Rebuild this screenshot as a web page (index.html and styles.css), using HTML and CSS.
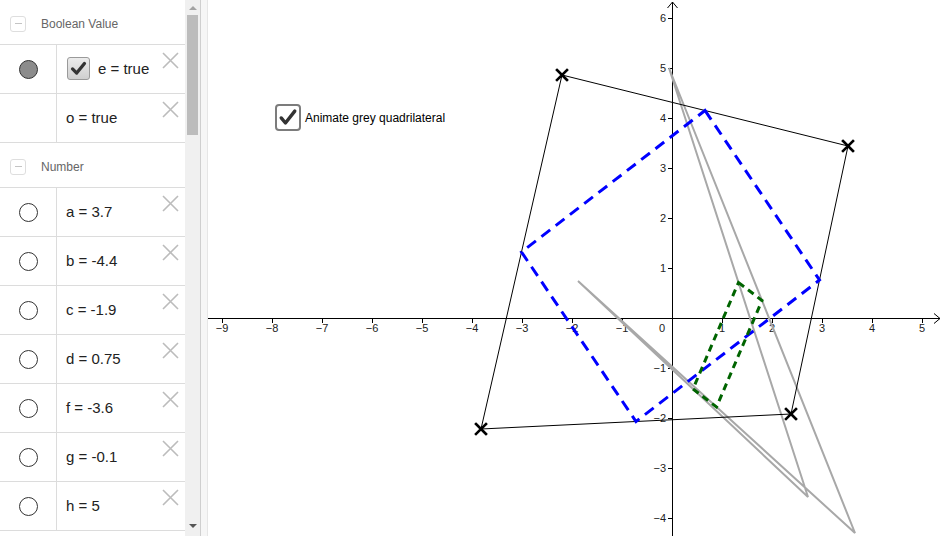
FILE: index.html
```html
<!DOCTYPE html>
<html>
<head>
<meta charset="utf-8">
<link rel="stylesheet" href="styles.css">
</head>
<body>
<div class="app">
  <div class="algebra">
    <div class="group-head"><span class="collapse"></span><span class="group-title">Boolean Value</span></div>
    <div class="row">
      <div class="marble"><span class="dot filled"></span></div>
      <div class="content">
        <span class="cb"><svg width="23" height="23" viewBox="0 0 23 23"><path d="M5 12 L9.5 16.5 L18 6" fill="none" stroke="#333" stroke-width="3.6" stroke-linecap="round" stroke-linejoin="round"/></svg></span>
        <span class="expr">e = true</span>
        <span class="del"><svg width="17" height="17" viewBox="0 0 17 17"><path d="M1 1 L16 16 M16 1 L1 16" stroke="#bcbcbc" stroke-width="1.6"/></svg></span>
      </div>
    </div>
    <div class="row">
      <div class="marble"></div>
      <div class="content">
        <span class="expr">o = true</span>
        <span class="del"><svg width="17" height="17" viewBox="0 0 17 17"><path d="M1 1 L16 16 M16 1 L1 16" stroke="#bcbcbc" stroke-width="1.6"/></svg></span>
      </div>
    </div>
    <div class="group-head"><span class="collapse"></span><span class="group-title">Number</span></div>
    <div class="row">
      <div class="marble"><span class="dot"></span></div>
      <div class="content"><span class="expr">a = 3.7</span><span class="del"><svg width="17" height="17" viewBox="0 0 17 17"><path d="M1 1 L16 16 M16 1 L1 16" stroke="#bcbcbc" stroke-width="1.6"/></svg></span></div>
    </div>
    <div class="row">
      <div class="marble"><span class="dot"></span></div>
      <div class="content"><span class="expr">b = -4.4</span><span class="del"><svg width="17" height="17" viewBox="0 0 17 17"><path d="M1 1 L16 16 M16 1 L1 16" stroke="#bcbcbc" stroke-width="1.6"/></svg></span></div>
    </div>
    <div class="row">
      <div class="marble"><span class="dot"></span></div>
      <div class="content"><span class="expr">c = -1.9</span><span class="del"><svg width="17" height="17" viewBox="0 0 17 17"><path d="M1 1 L16 16 M16 1 L1 16" stroke="#bcbcbc" stroke-width="1.6"/></svg></span></div>
    </div>
    <div class="row">
      <div class="marble"><span class="dot"></span></div>
      <div class="content"><span class="expr">d = 0.75</span><span class="del"><svg width="17" height="17" viewBox="0 0 17 17"><path d="M1 1 L16 16 M16 1 L1 16" stroke="#bcbcbc" stroke-width="1.6"/></svg></span></div>
    </div>
    <div class="row">
      <div class="marble"><span class="dot"></span></div>
      <div class="content"><span class="expr">f = -3.6</span><span class="del"><svg width="17" height="17" viewBox="0 0 17 17"><path d="M1 1 L16 16 M16 1 L1 16" stroke="#bcbcbc" stroke-width="1.6"/></svg></span></div>
    </div>
    <div class="row">
      <div class="marble"><span class="dot"></span></div>
      <div class="content"><span class="expr">g = -0.1</span><span class="del"><svg width="17" height="17" viewBox="0 0 17 17"><path d="M1 1 L16 16 M16 1 L1 16" stroke="#bcbcbc" stroke-width="1.6"/></svg></span></div>
    </div>
    <div class="row">
      <div class="marble"><span class="dot"></span></div>
      <div class="content"><span class="expr">h = 5</span><span class="del"><svg width="17" height="17" viewBox="0 0 17 17"><path d="M1 1 L16 16 M16 1 L1 16" stroke="#bcbcbc" stroke-width="1.6"/></svg></span></div>
    </div>
  </div>
  <div class="scrollbar">
    <span class="arrow-up"></span>
    <span class="thumb"></span>
    <span class="track"></span>
    <span class="arrow-down"></span>
  </div>
  <div class="divider"></div>
  <div class="graphics">
    <svg class="plot" width="735" height="536" viewBox="208 0 735 536">
      <!-- axes -->
      <g stroke="#000" stroke-width="1" fill="none">
        <path d="M208 318.5 H940"/>
        <path d="M934 313.5 L940 318.5 L934 323.5"/>
        <path d="M672.5 536 V2"/>
        <path d="M667.5 8 L672.5 2 L677.5 8"/>
        <path d="M222.5 318.5 v4.5 M272.5 318.5 v4.5 M322.5 318.5 v4.5 M372.5 318.5 v4.5 M422.5 318.5 v4.5 M472.5 318.5 v4.5 M522.5 318.5 v4.5 M572.5 318.5 v4.5 M622.5 318.5 v4.5 M722.5 318.5 v4.5 M772.5 318.5 v4.5 M822.5 318.5 v4.5 M872.5 318.5 v4.5 M922.5 318.5 v4.5"/>
        <path d="M668 18.5 h4.5 M668 68.5 h4.5 M668 118.5 h4.5 M668 168.5 h4.5 M668 218.5 h4.5 M668 268.5 h4.5 M668 368.5 h4.5 M668 418.5 h4.5 M668 468.5 h4.5 M668 518.5 h4.5"/>
      </g>
      <g class="lbl-x" text-anchor="middle">
        <text x="222" y="332">−9</text>
        <text x="272" y="332">−8</text>
        <text x="322" y="332">−7</text>
        <text x="372" y="332">−6</text>
        <text x="422" y="332">−5</text>
        <text x="472" y="332">−4</text>
        <text x="522" y="332">−3</text>
        <text x="572" y="332">−2</text>
        <text x="622" y="332">−1</text>
        <text x="662" y="332">0</text>
        <text x="722" y="332">1</text>
        <text x="772" y="332">2</text>
        <text x="822" y="332">3</text>
        <text x="872" y="332">4</text>
        <text x="922" y="332">5</text>
      </g>
      <g class="lbl-y" text-anchor="end">
        <text x="666" y="22">6</text>
        <text x="666" y="72">5</text>
        <text x="666" y="122">4</text>
        <text x="666" y="172">3</text>
        <text x="666" y="222">2</text>
        <text x="666" y="272">1</text>
        <text x="666" y="372">−1</text>
        <text x="666" y="422">−2</text>
        <text x="666" y="472">−3</text>
        <text x="666" y="522">−4</text>
      </g>
      <!-- grey quadrilateral -->
      <polygon points="669,68 808,497 578,281 855,533" fill="none" stroke="#a8a8a8" stroke-width="2"/>
      <!-- black quadrilateral -->
      <polygon points="562,75 848,146 791,414 481,429" fill="none" stroke="#000" stroke-width="1"/>
      <!-- blue midpoint parallelogram -->
      <polygon points="705,110.5 819.5,280 636,421.5 521.5,252" fill="none" stroke="#0000ff" stroke-width="3" stroke-dasharray="11 7"/>
      <!-- green midpoint parallelogram -->
      <polygon points="738.5,282.5 762,300.5 716.5,407 693,389" fill="none" stroke="#006400" stroke-width="3" stroke-dasharray="7 5"/>
      <!-- points -->
      <g stroke="#000" stroke-width="2.6" stroke-linecap="square">
        <path d="M557 70 L567 80 M567 70 L557 80"/>
        <path d="M843 141 L853 151 M853 141 L843 151"/>
        <path d="M786 409 L796 419 M796 409 L786 419"/>
        <path d="M476 424 L486 434 M486 424 L476 434"/>
      </g>
    </svg>
    <label class="animate">
      <span class="big-cb"><svg width="26" height="27" viewBox="0 0 26 27"><path d="M5 14 L10 20 L21 6" fill="none" stroke="#333" stroke-width="4" stroke-linecap="round" stroke-linejoin="round"/></svg></span>
      <span class="animate-text">Animate grey quadrilateral</span>
    </label>
  </div>
</div>
</body>
</html>
```

FILE: styles.css
```css
html, body {
  margin: 0;
  padding: 0;
  background: #fff;
  overflow: hidden;
}
.app {
  display: flex;
  width: 943px;
  height: 536px;
  font-family: "Liberation Sans", Arial, sans-serif;
}
.algebra {
  width: 185px;
  flex: none;
  height: 536px;
  overflow: hidden;
  background: #fff;
}
.group-head {
  height: 41px;
  padding-top: 3px;
  border-bottom: 1px solid #dcdcdc;
  display: flex;
  align-items: center;
}
.collapse {
  width: 14px;
  height: 14px;
  margin-left: 10px;
  border: 1px solid #dedede;
  border-radius: 3px;
  display: flex;
  align-items: center;
  justify-content: center;
}
.collapse::before {
  content: "";
  width: 7px;
  height: 1px;
  background: #c4c4c4;
}
.group-title {
  margin-left: 15px;
  font-size: 12px;
  color: #666;
}
.row {
  height: 48px;
  border-bottom: 1px solid #dcdcdc;
  display: flex;
}
.marble {
  width: 56px;
  flex: none;
  border-right: 1px solid #dcdcdc;
  display: flex;
  align-items: center;
  justify-content: center;
}
.dot {
  width: 17px;
  height: 17px;
  border: 1.5px solid #333;
  border-radius: 50%;
  background: #fff;
}
.dot.filled {
  background: #8c8c8c;
}
.content {
  flex: 1;
  display: flex;
  align-items: center;
  padding-left: 9px;
  padding-bottom: 2px;
}
.cb {
  width: 21px;
  height: 21px;
  border: 1px solid #9a9a9a;
  border-radius: 3px;
  background: linear-gradient(#ececec, #cfcfcf);
  margin-left: 1px;
  margin-right: 8px;
  display: flex;
  align-items: center;
  justify-content: center;
}
.cb svg { display: block; }
.expr {
  flex: 1;
  font-size: 15px;
  color: #222;
  white-space: nowrap;
}
.del {
  align-self: flex-start;
  margin-top: 7px;
  margin-right: 6px;
  width: 17px;
  height: 17px;
}
.del svg { display: block; }
.scrollbar {
  width: 15px;
  flex: none;
  background: #f0f0f0;
  display: flex;
  flex-direction: column;
  align-items: center;
}
.arrow-up {
  margin-top: 6px;
  width: 0;
  height: 0;
  border-left: 4px solid transparent;
  border-right: 4px solid transparent;
  border-bottom: 4px solid #a3a3a3;
}
.thumb {
  margin-top: 5px;
  width: 11px;
  height: 120px;
  background: #bcbcbc;
}
.track { flex: 1; }
.arrow-down {
  margin-bottom: 8px;
  width: 0;
  height: 0;
  border-left: 4px solid transparent;
  border-right: 4px solid transparent;
  border-top: 4px solid #555;
}
.divider {
  width: 6px;
  flex: none;
  border-left: 1px solid #cfcfcf;
  border-right: 1px solid #e6e6e6;
  background: #f6f6f6;
}
.graphics {
  flex: 1;
  position: relative;
  background: #fff;
}
.plot {
  display: block;
}
.lbl-x text, .lbl-y text {
  font-family: "Liberation Sans", Arial, sans-serif;
  font-size: 11px;
  fill: #222;
}
.animate {
  position: absolute;
  left: 67px;
  top: 104px;
  display: flex;
  align-items: center;
}
.big-cb {
  width: 22px;
  height: 23px;
  border: 2px solid #7c7c7c;
  border-radius: 4px;
  background: #fff;
  display: flex;
  align-items: center;
  justify-content: center;
}
.big-cb svg {
  display: block;
  width: 24px;
  height: 25px;
}
.animate-text {
  margin-left: 4px;
  font-size: 12px;
  color: #000;
}
```
